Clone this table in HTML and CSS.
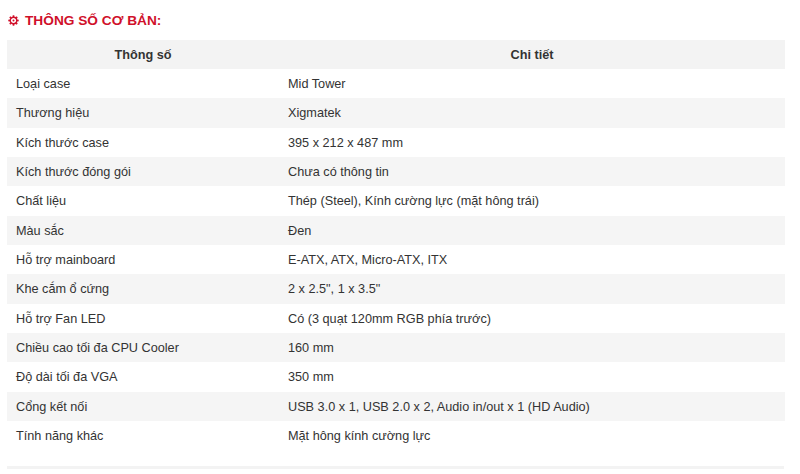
FILE: index.html
```html
<!DOCTYPE html>
<html lang="vi">
<head>
<meta charset="utf-8">
<title>Thông số cơ bản</title>
<link rel="stylesheet" href="styles.css">
</head>
<body>
<div class="wrap">
  <h3 class="title">
    <svg class="gear" viewBox="0 0 20 20" width="11" height="11" aria-hidden="true">
      <circle cx="10" cy="10" r="6" fill="none" stroke="#d0102a" stroke-width="2.6"/>
      <circle cx="10" cy="10" r="1.8" fill="#d0102a"/>
      <g stroke="#d0102a" stroke-width="3">
        <line x1="10" y1="0.5" x2="10" y2="4"/>
        <line x1="10" y1="16" x2="10" y2="19.5"/>
        <line x1="0.5" y1="10" x2="4" y2="10"/>
        <line x1="16" y1="10" x2="19.5" y2="10"/>
        <line x1="3.3" y1="3.3" x2="5.7" y2="5.7"/>
        <line x1="14.3" y1="14.3" x2="16.7" y2="16.7"/>
        <line x1="16.7" y1="3.3" x2="14.3" y2="5.7"/>
        <line x1="5.7" y1="14.3" x2="3.3" y2="16.7"/>
      </g>
    </svg>
    <span>THÔNG SỐ CƠ BẢN:</span>
  </h3>
  <table class="spec">
    <thead>
      <tr><th class="c1">Thông số</th><th>Chi tiết</th></tr>
    </thead>
    <tbody>
      <tr><td>Loại case</td><td>Mid Tower</td></tr>
      <tr><td>Thương hiệu</td><td>Xigmatek</td></tr>
      <tr><td>Kích thước case</td><td>395 x 212 x 487 mm</td></tr>
      <tr><td>Kích thước đóng gói</td><td>Chưa có thông tin</td></tr>
      <tr><td>Chất liệu</td><td>Thép (Steel), Kính cường lực (mặt hông trái)</td></tr>
      <tr><td>Màu sắc</td><td>Đen</td></tr>
      <tr><td>Hỗ trợ mainboard</td><td>E-ATX, ATX, Micro-ATX, ITX</td></tr>
      <tr><td>Khe cắm ổ cứng</td><td>2 x 2.5", 1 x 3.5"</td></tr>
      <tr><td>Hỗ trợ Fan LED</td><td>Có (3 quạt 120mm RGB phía trước)</td></tr>
      <tr><td>Chiều cao tối đa CPU Cooler</td><td>160 mm</td></tr>
      <tr><td>Độ dài tối đa VGA</td><td>350 mm</td></tr>
      <tr><td>Cổng kết nối</td><td>USB 3.0 x 1, USB 2.0 x 2, Audio in/out x 1 (HD Audio)</td></tr>
      <tr><td>Tính năng khác</td><td>Mặt hông kính cường lực</td></tr>
    </tbody>
  </table>
  <div class="divider"></div>
</div>
</body>
</html>
```
FILE: styles.css
```css
html, body {
  margin: 0;
  padding: 0;
  background: #ffffff;
}
body {
  font-family: Arial, "Liberation Sans", sans-serif;
  color: #333333;
  font-size: 12.7px;
}
.wrap {
  padding: 10px 15px 0 7px;
}
.title {
  margin: 0 0 10px 1px;
  height: 20px;
  display: flex;
  align-items: center;
  gap: 6px;
  color: #d0102a;
  font-size: 13.7px;
  font-weight: bold;
}
.gear {
  display: block;
}
.spec {
  width: 778px;
  border-collapse: collapse;
  table-layout: fixed;
}
.spec th {
  background: #f3f3f3;
  font-weight: bold;
  text-align: center;
  height: 28px;
  padding: 1px 9px 0;
  color: #333;
}
.spec th.c1 {
  width: 254px;
}
.spec td {
  height: 27.33px;
  padding: 2px 9px 0;
  line-height: 19px;
}
.spec tbody tr:nth-child(even) td {
  background: #f5f5f5;
}
.divider {
  margin-top: 16px;
  width: 777px;
  height: 3px;
  background: #f3f3f3;
}
```
